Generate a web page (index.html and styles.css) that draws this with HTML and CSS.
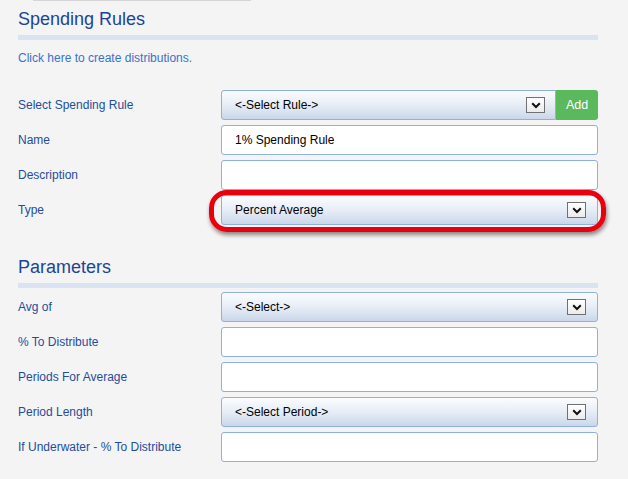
FILE: index.html
```html
<!DOCTYPE html>
<html>
<head>
<meta charset="utf-8">
<link rel="stylesheet" href="styles.css">
</head>
<body>
<div class="topline"></div>
<div class="page">
  <h2 class="section-title">Spending Rules</h2>
  <a class="link" href="#">Click here to create distributions.</a>

  <div class="form form-rules">
    <label class="label">Select Spending Rule</label>
    <div class="field-group">
      <div class="field select select-rule"><span>&lt;-Select Rule-&gt;</span><span class="arrow"><svg width="10" height="7" viewBox="0 0 10 7"><path d="M1.2 1.2 L5 5 L8.8 1.2" fill="none" stroke="#111" stroke-width="2"/></svg></span></div>
      <button class="btn-add">Add</button>
    </div>

    <label class="label">Name</label>
    <input class="field" type="text" value="1% Spending Rule">

    <label class="label">Description</label>
    <input class="field" type="text" value="">

    <label class="label">Type</label>
    <div class="field select type-field"><span>Percent Average</span><span class="arrow"><svg width="10" height="7" viewBox="0 0 10 7"><path d="M1.2 1.2 L5 5 L8.8 1.2" fill="none" stroke="#111" stroke-width="2"/></svg></span><span class="highlight"></span></div>
  </div>

  <h2 class="section-title params-title">Parameters</h2>

  <div class="form form-params">
    <label class="label">Avg of</label>
    <div class="field select"><span>&lt;-Select-&gt;</span><span class="arrow"><svg width="10" height="7" viewBox="0 0 10 7"><path d="M1.2 1.2 L5 5 L8.8 1.2" fill="none" stroke="#111" stroke-width="2"/></svg></span></div>

    <label class="label">% To Distribute</label>
    <input class="field" type="text" value="">

    <label class="label">Periods For Average</label>
    <input class="field" type="text" value="">

    <label class="label">Period Length</label>
    <div class="field select"><span>&lt;-Select Period-&gt;</span><span class="arrow"><svg width="10" height="7" viewBox="0 0 10 7"><path d="M1.2 1.2 L5 5 L8.8 1.2" fill="none" stroke="#111" stroke-width="2"/></svg></span></div>

    <label class="label">If Underwater - % To Distribute</label>
    <input class="field" type="text" value="">
  </div>
</div>
</body>
</html>
```

FILE: styles.css
```css
body {
  margin: 0;
  background: #f4f4f4;
  font-family: "Liberation Sans", Arial, sans-serif;
  font-size: 12px;
}

.topline {
  margin-left: 33px;
  width: 218px;
  height: 1px;
  background: #d5d5d5;
}

.page {
  padding: 0 30px 0 18px;
}

.section-title {
  margin: 7px 0 0;
  font-size: 18px;
  font-weight: normal;
  line-height: 22px;
  color: #1b4595;
  padding-bottom: 5px;
  border-bottom: 5px solid #dae3f2;
}

.params-title {
  margin-top: 31px;
}

.link {
  display: block;
  margin-top: 11px;
  line-height: 14px;
  color: #3a72cc;
  text-decoration: none;
}

.form {
  display: grid;
  grid-template-columns: 203px 1fr;
  row-gap: 5px;
  margin-top: 25px;
}

.form-params {
  margin-top: 4px;
}

.label {
  align-self: center;
  color: #1f4d9c;
}

.field {
  height: 30px;
  box-sizing: border-box;
  border: 1px solid #8fb1dd;
  border-radius: 3px;
  background: #fff;
  padding: 0 13px;
  display: flex;
  align-items: center;
  font: inherit;
  color: #000;
  width: 100%;
  margin: 0;
  outline: none;
}

.select {
  justify-content: space-between;
  padding-right: 11px;
  background: linear-gradient(#fbfcfe, #e7edf6 50%, #cad7ea);
}

.field-group {
  display: flex;
}

.select-rule {
  flex: 1;
  border-radius: 3px 0 0 3px;
  padding-right: 10px;
}

.arrow {
  width: 19px;
  height: 16px;
  box-sizing: border-box;
  border: 1px solid #707070;
  background: linear-gradient(#ffffff, #ebebeb);
  display: flex;
  align-items: center;
  justify-content: center;
}

.btn-add {
  width: 42px;
  height: 30px;
  border: none;
  border-radius: 0 3px 3px 0;
  background: #5cb85c;
  color: #fff;
  font: inherit;
  font-size: 12.5px;
  padding: 0;
}

.type-field {
  position: relative;
}

.highlight {
  position: absolute;
  left: -13px;
  right: -9px;
  top: -6px;
  bottom: -8px;
  border: 5px solid #e8000e;
  border-radius: 18px;
  box-shadow: 1px 3px 4px rgba(0, 0, 0, 0.45);
  pointer-events: none;
}
```
